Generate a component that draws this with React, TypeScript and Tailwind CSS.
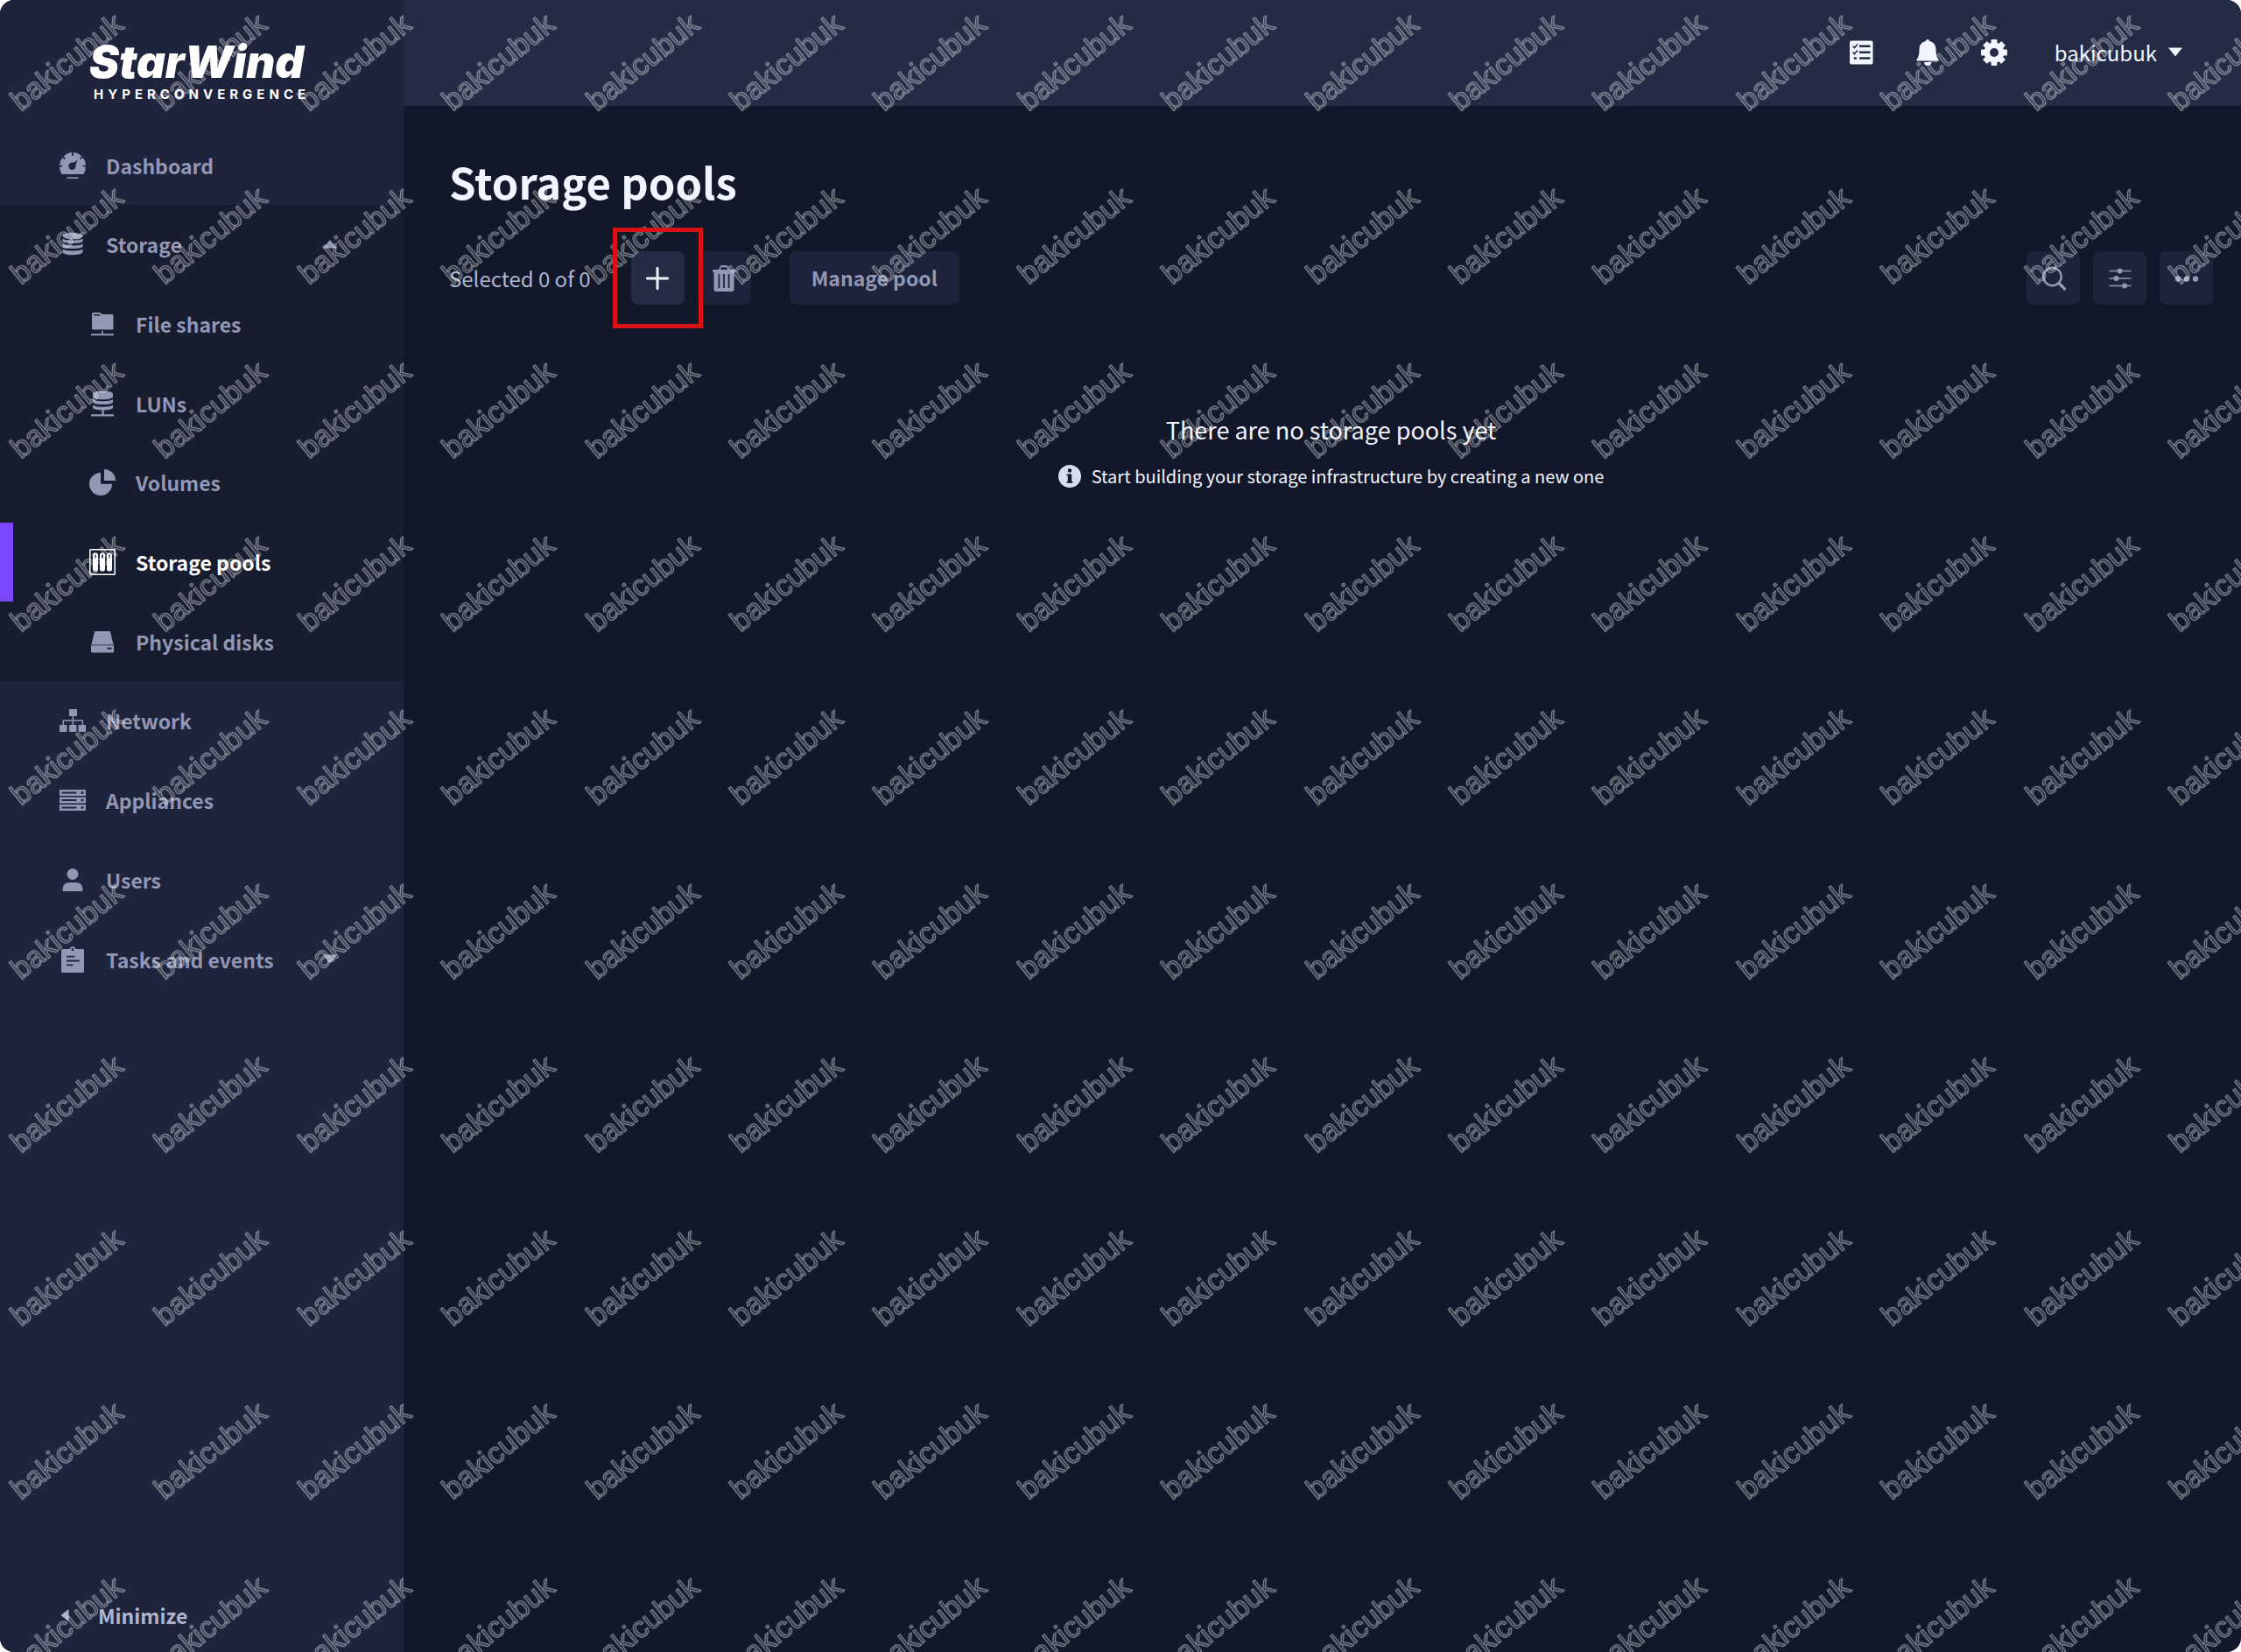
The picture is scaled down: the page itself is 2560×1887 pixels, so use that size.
import type { ReactNode } from 'react';

const MARK_COLS = 16;
const MARK_ROWS = 10;

type IconProps = { className?: string };

function Icon({ className = 'size-[30px]', children }: IconProps & { children: ReactNode }) {
  return (
    <svg viewBox="0 0 30 30" fill="currentColor" className={`shrink-0 ${className}`} aria-hidden="true">
      {children}
    </svg>
  );
}

function DashboardIcon() {
  return (
    <Icon>
      <path
        fillRule="evenodd"
        d="M2.6 25A15 15 0 0 1 0 16.6h3v-1.8H0A15 15 0 0 1 3.4 6l2.4 2.3 1.2-1.2L4.6 4.7A15 15 0 0 1 14.1 0v4h1.8V0a15 15 0 0 1 9.4 4.6L23 7l1.2 1.2 2.4-2.4A15 15 0 0 1 30 14.8h-3v1.8h3A15 15 0 0 1 27.4 25ZM20.6 9l-4.8 2.8a4.2 4.2 0 1 0 2.6 2.6Z"
      />
      <rect x="8.5" y="28.4" width="13" height="1.6" />
    </Icon>
  );
}

function DatabaseIcon() {
  return (
    <Icon>
      <ellipse cx="15" cy="5.6" rx="11.5" ry="3.8" />
      <path d="M3.5 8.6c2 2.6 21 2.6 23 0v3.2c-2 3-21 3-23 0ZM3.5 14.6c2 2.6 21 2.6 23 0v3.2c-2 3-21 3-23 0ZM3.5 20.6c2 2.6 21 2.6 23 0v3.4c-2 4.4-21 4.4-23 0Z" />
    </Icon>
  );
}

function FileShareIcon() {
  return (
    <Icon>
      <path
        fillRule="evenodd"
        d="M4.5 2h7.6l2.6 2H26a1.5 1.5 0 0 1 1.5 1.5V20a1.5 1.5 0 0 1-1.5 1.5H4.5A1.5 1.5 0 0 1 3 20V3.5A1.5 1.5 0 0 1 4.5 2Zm.5 2v1.6h7.8L11.3 4Z"
      />
      <path d="M14.2 23H16v3.2h12v2H2v-2h12.2Z" />
    </Icon>
  );
}

function LunIcon() {
  return (
    <Icon>
      <path d="M4 3.5C6-.5 25-.5 27 3.5v4.2c-2 3.4-21 3.4-23 0Z" />
      <path d="M4 10c2 3 21 3 23 0v3.4c-2 3.6-21 3.6-23 0ZM4 16.4c2 3 21 3 23 0v3.4c-1 1.8-5.5 2.6-10.3 2.8v4.6H28v2.3H2v-2.3h12.4v-4.6C9.6 22.4 5 21.6 4 19.8Z" />
    </Icon>
  );
}

function PieIcon() {
  return (
    <Icon>
      <path d="M13 4v12.8h13A13 13 0 1 1 13 4Z" />
      <path d="M17 0a13 13 0 0 1 13 13H17Z" />
    </Icon>
  );
}

function PoolIcon() {
  return (
    <Icon>
      <rect x="0.8" y="0.8" width="28.4" height="28.4" rx="0.8" fill="none" stroke="currentColor" strokeWidth="1.5" />
      {[4, 12, 20].map(x => (
        <path
          key={x}
          fillRule="evenodd"
          d={`M${x + 1.5} 4.5h3l1.5 1.5v18l-1.5 1.5h-3L${x} 24V6ZM${x + 2.2} 6.5v4h1.6v-4Z`}
        />
      ))}
    </Icon>
  );
}

function DiskIcon() {
  return (
    <Icon>
      <path d="M7.2 3h15.6a1.5 1.5 0 0 1 1.4 1.2L27.6 18.4H2.4L5.8 4.2A1.5 1.5 0 0 1 7.2 3Z" />
      <path
        fillRule="evenodd"
        d="M2 19.2h26V26a1.5 1.5 0 0 1-1.5 1.5h-23A1.5 1.5 0 0 1 2 26Zm18.5 2.6v1.6h5v-1.6Z"
      />
    </Icon>
  );
}

function NetworkIcon() {
  return (
    <Icon>
      <rect x="11" y="2" width="9" height="8" rx="1" />
      <rect x="0" y="20" width="8.5" height="8" rx="1" />
      <rect x="11" y="20" width="8.5" height="8" rx="1" />
      <rect x="21.5" y="20" width="8.5" height="8" rx="1" />
      <path d="M15.3 10v10M4.3 20v-5h22v5" fill="none" stroke="currentColor" strokeWidth="1.5" />
    </Icon>
  );
}

function ServerIcon() {
  return (
    <Icon>
      {[3, 11.5, 20].map(y => (
        <path
          key={y}
          fillRule="evenodd"
          d={`M0 ${y}h30v7H0ZM2.5 ${y + 2.5}v2h17v-2ZM24.5 ${y + 2.2}v2.6h3v-2.6Z`}
        />
      ))}
    </Icon>
  );
}

function UserIcon() {
  return (
    <Icon>
      <circle cx="15" cy="8.5" r="6.5" />
      <path d="M3.7 28v-3.5A7 7 0 0 1 10.7 18h8.6a7 7 0 0 1 7 6.5V28Z" />
    </Icon>
  );
}

function ClipboardIcon() {
  return (
    <Icon>
      <path
        fillRule="evenodd"
        d="M3.5 3h8a3.6 3.6 0 0 1 7 0h8A1.5 1.5 0 0 1 28 4.5v24a1.5 1.5 0 0 1-1.5 1.5h-23A1.5 1.5 0 0 1 2 28.5v-24A1.5 1.5 0 0 1 3.5 3ZM15 2a1.5 1.5 0 1 0 0 3 1.5 1.5 0 0 0 0-3ZM8 10.8v1.8h9.5v-1.8Zm0 4.8v1.8h15v-1.8Zm0 4.8v1.8h7.5v-1.8Z"
      />
    </Icon>
  );
}

function TaskListIcon() {
  return (
    <Icon>
      <path
        fillRule="evenodd"
        d="M4 1.5h22.500a2 2 0 0 1 2 2v23a2 2 0 0 1-2 2H4a2 2 0 0 1-2-2v-23a2 2 0 0 1 2-2ZM13 6.5V9h12.5V6.5ZM13 13.5V16h12.5v-2.5ZM13 20.2v2.5h12.5v-2.5ZM6.8 20.2v2.6h3v-2.6Z"
      />
      <path d="m5.5 7.5 2 2 3.5-4M5.5 14.5l2 2 3.5-4" fill="none" stroke="#242b45" strokeWidth="1.6" />
    </Icon>
  );
}

function BellIcon() {
  return (
    <Icon>
      <path d="M15 0a2.2 2.2 0 0 1 2.2 2.1C22 3.2 24.5 6.8 24.5 11.5c0 6 1 8.800 3 11.5.6.9.1 1.5-.8 1.5H3.300c-.9 0-1.4-.6-.8-1.5 2-2.7 3-5.5 3-11.5 0-4.7 2.5-8.3 7.300-9.400A2.2 2.2 0 0 1 15 0ZM11 26h8a4 4 0 0 1-8 0Z" />
    </Icon>
  );
}

function GearIcon() {
  return (
    <Icon>
      {[0, 45, 90, 135].map(angle => (
        <rect key={angle} x="11.5" y="0" width="7" height="30" rx="1" transform={`rotate(${angle} 15 15)`} />
      ))}
      <circle cx="15" cy="15" r="11.5" />
      <circle cx="15" cy="15" r="5" fill="#242b45" />
    </Icon>
  );
}

function PlusIcon() {
  return (
    <Icon className="size-[26px]">
      <path d="M15 1.5v27M1.5 15h27" fill="none" stroke="currentColor" strokeWidth="3.4" strokeLinecap="round" />
    </Icon>
  );
}

function TrashIcon() {
  return (
    <Icon>
      <path
        fillRule="evenodd"
        d="M2 5h7l1.5-3.5L12 0h6l1.5 1.5L21 5h7v2.5h-1.5V28a2.5 2.5 0 0 1-2.5 2H6a2.5 2.5 0 0 1-2.5-2V7.5H2ZM11 5h8l-1-2.8h-6ZM8.5 10v16h1.8V10Zm5.6 0v16h1.8V10Zm5.6 0v16h1.8V10Z"
      />
    </Icon>
  );
}

function SearchIcon() {
  return (
    <Icon>
      <circle cx="13.5" cy="13" r="10.2" fill="none" stroke="currentColor" strokeWidth="2.4" />
      <path d="m21.5 21 6 6" stroke="currentColor" strokeWidth="3.4" strokeLinecap="round" />
    </Icon>
  );
}

function SlidersIcon() {
  return (
    <Icon>
      <path d="M2.5 6.5h25M2.5 15h25M2.5 23.5h25" stroke="currentColor" strokeWidth="1.5" />
      <circle cx="14.5" cy="6.5" r="3" />
      <circle cx="10.5" cy="15" r="3" />
      <circle cx="20" cy="23.5" r="3" />
    </Icon>
  );
}

function DotsIcon() {
  return (
    <Icon>
      <circle cx="5" cy="15.5" r="3.2" />
      <circle cx="15" cy="15.5" r="3.2" />
      <circle cx="25" cy="15.5" r="3.2" />
    </Icon>
  );
}

function InfoIcon() {
  return (
    <Icon className="size-[26px]">
      <path
        fillRule="evenodd"
        d="M15 0a15 15 0 1 1 0 30 15 15 0 0 1 0-30Zm0 5a2.6 2.6 0 1 0 0 5.2A2.6 2.6 0 0 0 15 5Zm-4 7v2.2h1.5v7.6H11V24h8v-2.2h-1.5V12Z"
      />
    </Icon>
  );
}

function Caret({ direction = 'down' }: { direction?: 'up' | 'down' | 'left' }) {
  const points = {
    up: '0,12.5 8,3 16,12.5',
    down: '0,2.5 16,2.5 8,12.5',
    left: '12.5,1 12.5,15 3.5,8',
  };
  return (
    <svg viewBox="0 0 16 16" className="size-4 shrink-0" fill="currentColor" aria-hidden="true">
      <polygon points={points[direction]} />
    </svg>
  );
}

function NavLink({ icon, label, nested, active }: { icon: ReactNode; label: string; nested?: boolean; active?: boolean }) {
  return (
    <a
      href="#"
      aria-current={active ? 'page' : undefined}
      className={`flex items-center gap-[23px] border-l-[15px] ${nested ? 'pl-[87px]' : 'pl-[53px]'} ${
        active ? 'border-[#7a48ff] text-white' : 'border-transparent'
      }`}
    >
      {icon}
      {label}
    </a>
  );
}

function NavToggle({ icon, label, open }: { icon: ReactNode; label: string; open: boolean }) {
  return (
    <button type="button" aria-expanded={open} className="flex items-center gap-[23px] pr-[76px] pl-[68px] text-left">
      {icon}
      <span className="flex-1">{label}</span>
      <Caret direction={open ? 'up' : 'down'} />
    </button>
  );
}

function ToolButton({ label, primary, children }: { label: string; primary?: boolean; children: ReactNode }) {
  return (
    <button
      type="button"
      aria-label={label}
      className={`flex size-[61px] items-center justify-center rounded-lg ${
        primary ? 'bg-[#242b45] text-[#eef0fb]' : 'bg-[#1e233c] text-[#9297b3]'
      }`}
    >
      {children}
    </button>
  );
}

function Sidebar() {
  return (
    <aside className="flex w-[461px] shrink-0 flex-col bg-[#1f243d] text-[23px] leading-8 font-bold text-[#9297b3]">
      <div className="flex h-[143px] flex-col items-start pt-[46px] pl-[102px] text-white">
        <span className="font-[Inter] text-[51px] leading-[50px] font-black italic">StarWind</span>
        <span className="pl-[5px] font-[Inter] text-[15px] leading-6 font-bold tracking-[5px]">HYPERCONVERGENCE</span>
      </div>
      <nav className="flex flex-1 flex-col">
        <div className="grid h-[91px]">
          <NavLink icon={<DashboardIcon />} label="Dashboard" />
        </div>
        <div className="grid h-[544px] auto-rows-fr bg-[#171c2f]">
          <NavToggle icon={<DatabaseIcon />} label="Storage" open />
          <NavLink nested icon={<FileShareIcon />} label="File shares" />
          <NavLink nested icon={<LunIcon />} label="LUNs" />
          <NavLink nested icon={<PieIcon />} label="Volumes" />
          <NavLink nested active icon={<PoolIcon />} label="Storage pools" />
          <NavLink nested icon={<DiskIcon />} label="Physical disks" />
        </div>
        <div className="grid h-[363px] auto-rows-fr">
          <NavLink icon={<NetworkIcon />} label="Network" />
          <NavLink icon={<ServerIcon />} label="Appliances" />
          <NavLink icon={<UserIcon />} label="Users" />
          <NavToggle icon={<ClipboardIcon />} label="Tasks and events" open={false} />
        </div>
      </nav>
      <button type="button" className="flex h-[84px] items-center gap-[30px] pl-[66px] text-left text-[#b0b5cd]">
        <Caret direction="left" />
        Minimize
      </button>
    </aside>
  );
}

function TopBar() {
  return (
    <header className="flex h-[121px] items-center justify-end gap-[46px] bg-[#242b45] pr-[67px] pb-[2px] text-[#f2f4ff]">
      <button type="button" aria-label="Tasks">
        <TaskListIcon />
      </button>
      <button type="button" aria-label="Notifications">
        <BellIcon />
      </button>
      <button type="button" aria-label="Settings">
        <GearIcon />
      </button>
      <button type="button" className="flex items-center gap-[13px] pl-2 text-2xl">
        bakicubuk
        <Caret />
      </button>
    </header>
  );
}

function Watermark() {
  const marks = Array.from({ length: MARK_COLS * MARK_ROWS }, (_, i) => ({
    x: Math.round(24 + (i % MARK_COLS) * 164.4),
    y: Math.round(128 + Math.floor(i / MARK_COLS) * 198.3),
  }));

  return (
    <svg className="pointer-events-none absolute inset-0 size-full drop-shadow-[0_0_1px_rgba(255,255,255,0.5)]" aria-hidden="true">
      <g
        fill="#ffffff"
        fillOpacity="0.06"
        stroke="#ffffff"
        strokeOpacity="0.4"
        strokeWidth="1"
        strokeLinejoin="round"
        className="font-['Liberation_Sans',Arial,sans-serif] text-[34px]"
      >
        {marks.map(({ x, y }) => (
          <text key={`${x}-${y}`} transform={`translate(${x} ${y}) rotate(-39)`}>
            bakicubuk
          </text>
        ))}
      </g>
    </svg>
  );
}

export default function App() {
  return (
    <div className="min-h-screen bg-white">
      <div className="relative flex min-h-screen overflow-hidden rounded-2xl bg-[#121829] font-['Noto_Sans_CJK_SC','Noto_Sans',sans-serif]">
        <Sidebar />
        <div className="flex min-w-0 flex-1 flex-col">
          <TopBar />
          <main className="flex-1 pt-[50px] pr-8 pl-[52px]">
            <h1 className="text-[49px] leading-[72px] font-bold text-[#f2f4ff]">Storage pools</h1>
            <div className="mt-11 flex items-center gap-[15px]">
              <span className="mr-[31px] text-2xl text-[#b0b5cd]">Selected 0 of 0</span>
              <div className="relative">
                <ToolButton label="Add" primary>
                  <PlusIcon />
                </ToolButton>
                <div className="pointer-events-none absolute -inset-x-[21px] -inset-y-[27px] z-10 border-[5px] border-[#d81313]" />
              </div>
              <ToolButton label="Delete">
                <TrashIcon />
              </ToolButton>
              <button
                type="button"
                className="ml-[29px] h-[61px] rounded-lg bg-[#1e233c] px-[25px] text-[23px] font-bold text-[#9297b3]"
              >
                Manage pool
              </button>
              <div className="ml-auto flex gap-[15px]">
                <ToolButton label="Search">
                  <SearchIcon />
                </ToolButton>
                <ToolButton label="Filters">
                  <SlidersIcon />
                </ToolButton>
                <ToolButton label="More">
                  <DotsIcon />
                </ToolButton>
              </div>
            </div>
            <section className="mt-[125px] flex flex-col items-center gap-[19px] text-[#f2f4ff]">
              <h2 className="text-[27px] leading-9">There are no storage pools yet</h2>
              <p className="flex items-center gap-3 text-xl leading-8">
                <span className="text-[#d9dcf2]">
                  <InfoIcon />
                </span>
                Start building your storage infrastructure by creating a new one
              </p>
            </section>
          </main>
        </div>
        <Watermark />
      </div>
    </div>
  );
}
